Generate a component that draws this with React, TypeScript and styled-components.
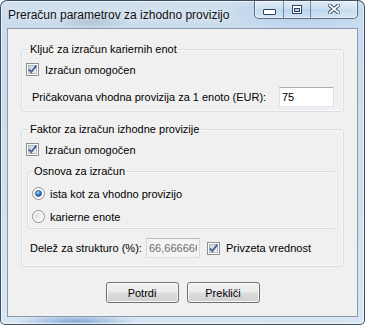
import React from "react";
import styled, { createGlobalStyle } from "styled-components";

const Global = createGlobalStyle`
  html, body { margin: 0; padding: 0; overflow: hidden; background: #ffffff; }
  * { box-sizing: border-box; }
`;

const UI_FONT = `"Liberation Sans", Arial, sans-serif`;

const Window = styled.div`
  width: 365px;
  height: 325px;
  border: 1px solid rgba(38, 52, 70, 0.85);
  border-radius: 7px 7px 5px 5px;
  padding: 0 6px 7px 6px;
  display: flex;
  flex-direction: column;
  background:
    radial-gradient(ellipse 60px 6px at 75px 320px, rgba(70, 120, 190, 0.55), transparent),
    radial-gradient(ellipse 40px 8px at 90px 20px, rgba(120, 140, 165, 0.35), transparent),
    radial-gradient(ellipse 80px 20px at 300px 10px, rgba(150, 195, 235, 0.6), transparent),
    linear-gradient(180deg, #d2e0ee 0px, #c9dbee 28px, #cfe0f1 200px, #d8e6f3 325px);
  box-shadow: inset 0 0 0 1px rgba(255, 255, 255, 0.55);
  overflow: hidden;
`;

const TitleBar = styled.div`
  height: 27px;
  display: flex;
  align-items: flex-start;
`;

const Title = styled.div`
  padding-left: 1px;
  line-height: 28px;
  font-family: ${UI_FONT};
  font-size: 12px;
  color: #111111;
  white-space: nowrap;
  text-shadow: 0 0 6px rgba(255, 255, 255, 0.9);
`;

const CaptionGroup = styled.div`
  margin-left: auto;
  margin-top: -1px;
  height: 19px;
  display: flex;
  border: 1px solid rgba(48, 66, 92, 0.75);
  border-top: none;
  border-radius: 0 0 5px 5px;
  overflow: hidden;
  background: linear-gradient(180deg, rgba(255, 255, 255, 0.55) 0%, rgba(255, 255, 255, 0.25) 50%, rgba(220, 235, 250, 0.2) 51%, rgba(255, 255, 255, 0.35) 100%);
  box-shadow: inset 0 0 0 1px rgba(255, 255, 255, 0.45);
`;

const CaptionButton = styled.div<{ $w: number }>`
  width: ${(p) => p.$w}px;
  height: 100%;
  display: flex;
  align-items: center;
  justify-content: center;
  & + & {
    border-left: 1px solid rgba(48, 66, 92, 0.55);
  }
`;

const Client = styled.div`
  flex: 1;
  border: 1px solid #8a9aab;
  background: #f0f0f0;
  padding: 0 13px;
  display: flex;
  flex-direction: column;
`;

const Group = styled.fieldset<{ $top: number; $side?: number }>`
  margin: ${(p) => p.$top}px ${(p) => p.$side ?? 0}px 0 ${(p) => p.$side ?? 0}px;
  padding: 0;
  min-width: 0;
  border: 1px solid #d5dfe5;
  border-radius: 3px;
  box-shadow: inset 0 0 0 1px rgba(255, 255, 255, 0.6);
`;

const Legend = styled.legend<{ $offset: number }>`
  margin-left: ${(p) => p.$offset}px;
  padding: 0 2px;
  font-family: ${UI_FONT};
  font-size: 11px;
  line-height: 13px;
  color: #000000;
`;

const GroupBody = styled.div<{ $pt: number; $pb: number }>`
  display: flex;
  flex-direction: column;
  padding: ${(p) => p.$pt}px 0 ${(p) => p.$pb}px 0;
`;

const OptionRow = styled.label<{ $indent: number; $top?: number; $gap: number }>`
  height: 17px;
  margin-top: ${(p) => p.$top ?? 0}px;
  padding-left: ${(p) => p.$indent}px;
  display: flex;
  align-items: center;
  gap: ${(p) => p.$gap}px;
  font-family: ${UI_FONT};
  font-size: 11px;
  color: #000000;
  white-space: nowrap;
`;

const FieldRow = styled.div<{ $indent: number; $top: number }>`
  height: 20px;
  margin-top: ${(p) => p.$top}px;
  padding-left: ${(p) => p.$indent}px;
  display: flex;
  align-items: center;
  font-family: ${UI_FONT};
  font-size: 11px;
  color: #000000;
  white-space: nowrap;
`;

const FieldLabel = styled.span<{ $w: number }>`
  width: ${(p) => p.$w}px;
  flex: none;
`;

const TextBox = styled.input<{ $w: number }>`
  width: ${(p) => p.$w}px;
  height: 20px;
  flex: none;
  margin: 0;
  padding: 0 2px;
  border: 1px solid;
  border-color: #abadb3 #dbdfe6 #e3e9ef #e2e3ea;
  background: #ffffff;
  font-family: ${UI_FONT};
  font-size: 11px;
  color: #000000;
  outline: none;
  &:disabled {
    background: #f4f4f4;
    border-color: #b6bcc3 #d5d9de #dcdfe3 #d5d9de;
    color: #6d6d6d;
  }
`;

const Spacer = styled.span<{ $w: number }>`
  width: ${(p) => p.$w}px;
  flex: none;
`;

const ButtonRow = styled.div`
  margin-top: 15px;
  display: flex;
  justify-content: center;
  gap: 8px;
`;

const PushButton = styled.button`
  width: 73px;
  height: 21px;
  margin: 0;
  padding: 0;
  border: 1px solid #707070;
  border-radius: 3px;
  background: linear-gradient(180deg, #f2f2f2 0%, #ebebeb 48%, #dddddd 52%, #cfcfcf 100%);
  box-shadow: inset 0 0 0 1px rgba(252, 252, 252, 0.9);
  font-family: ${UI_FONT};
  font-size: 11px;
  color: #000000;
`;

const BoxIcon = styled.svg`
  flex: none;
  display: block;
`;

function CheckBox() {
  return (
    <BoxIcon width="13" height="13" viewBox="0 0 13 13">
      <defs>
        <linearGradient id="cbg" x1="0" y1="0" x2="1" y2="1">
          <stop offset="0" stopColor="#cdd1d6" />
          <stop offset="1" stopColor="#f7f7f7" />
        </linearGradient>
      </defs>
      <rect x="0.5" y="0.5" width="12" height="12" fill="#ffffff" stroke="#8e8f8f" />
      <rect x="2.5" y="2.5" width="8" height="8" fill="url(#cbg)" stroke="#b2b7bd" />
      <path d="M3 6.3 L5.3 9 L10.3 2.6" fill="none" stroke="#4b5f99" strokeWidth="1.9" strokeLinejoin="miter" />
    </BoxIcon>
  );
}

function Radio({ checked }: { checked: boolean }) {
  return (
    <BoxIcon width="13" height="13" viewBox="0 0 13 13">
      <defs>
        <linearGradient id="rbg" x1="0" y1="0" x2="1" y2="1">
          <stop offset="0" stopColor="#d6d9dd" />
          <stop offset="1" stopColor="#fbfbfb" />
        </linearGradient>
        <radialGradient id="rdot" cx="0.4" cy="0.35" r="0.7">
          <stop offset="0" stopColor="#b7e4ff" />
          <stop offset="0.45" stopColor="#3d8ad6" />
          <stop offset="1" stopColor="#14428a" />
        </radialGradient>
      </defs>
      <circle cx="6.5" cy="6.5" r="6" fill="#ffffff" stroke="#8e8f8f" />
      <circle cx="6.5" cy="6.5" r="4.3" fill="url(#rbg)" />
      {checked && <circle cx="6.5" cy="6.5" r="3" fill="url(#rdot)" stroke="#1c4e8f" strokeWidth="0.6" />}
    </BoxIcon>
  );
}

function MinGlyph() {
  return (
    <svg width="13" height="6" viewBox="0 0 13 6" style={{ marginTop: 6 }}>
      <rect x="0.5" y="0.5" width="12" height="5" rx="0.5" fill="#ffffff" stroke="#33415a" />
    </svg>
  );
}

function MaxGlyph() {
  return (
    <svg width="10" height="9" viewBox="0 0 10 9">
      <rect x="0.5" y="0.5" width="9" height="8" fill="#ffffff" stroke="#33415a" />
      <rect x="2.5" y="3.5" width="5" height="3" fill="#b7cde4" stroke="#33415a" />
    </svg>
  );
}

function CloseGlyph() {
  return (
    <svg width="12" height="10" viewBox="0 0 12 10">
      <path d="M1.5 1.2 L10.5 8.8 M10.5 1.2 L1.5 8.8" stroke="#33415a" strokeWidth="3.6" strokeLinecap="square" />
      <path d="M1.5 1.2 L10.5 8.8 M10.5 1.2 L1.5 8.8" stroke="#ffffff" strokeWidth="1.8" strokeLinecap="square" />
    </svg>
  );
}

export default function App() {
  return (
    <>
      <Global />
      <Window>
        <TitleBar>
          <Title>Preračun parametrov za izhodno provizijo</Title>
          <CaptionGroup>
            <CaptionButton $w={28}>
              <MinGlyph />
            </CaptionButton>
            <CaptionButton $w={27}>
              <MaxGlyph />
            </CaptionButton>
            <CaptionButton $w={47}>
              <CloseGlyph />
            </CaptionButton>
          </CaptionGroup>
        </TitleBar>
        <Client>
          <Group $top={14}>
            <Legend $offset={6}>Ključ za izračun kariernih enot</Legend>
            <GroupBody $pt={5} $pb={4}>
              <OptionRow $indent={4} $gap={6}>
                <CheckBox />
                Izračun omogočen
              </OptionRow>
              <FieldRow $indent={10} $top={9}>
                <FieldLabel $w={247}>Pričakovana vhodna provizija za 1 enoto (EUR):</FieldLabel>
                <TextBox $w={55} value="75" readOnly />
              </FieldRow>
            </GroupBody>
          </Group>
          <Group $top={11}>
            <Legend $offset={6}>Faktor za izračun izhodne provizije</Legend>
            <GroupBody $pt={5} $pb={8}>
              <OptionRow $indent={4} $gap={6}>
                <CheckBox />
                Izračun omogočen
              </OptionRow>
              <Group $top={7} $side={5}>
                <Legend $offset={4}>Osnova za izračun</Legend>
                <GroupBody $pt={7} $pb={3}>
                  <OptionRow $indent={4} $gap={5}>
                    <Radio checked />
                    ista kot za vhodno provizijo
                  </OptionRow>
                  <OptionRow $indent={4} $gap={5} $top={6}>
                    <Radio checked={false} />
                    karierne enote
                  </OptionRow>
                </GroupBody>
              </Group>
              <FieldRow $indent={8} $top={9}>
                <FieldLabel $w={116}>Delež za strukturo (%):</FieldLabel>
                <TextBox $w={54} value="66,666666666" disabled readOnly />
                <Spacer $w={7} />
                <CheckBox />
                <Spacer $w={6} />
                Privzeta vrednost
              </FieldRow>
            </GroupBody>
          </Group>
          <ButtonRow>
            <PushButton>Potrdi</PushButton>
            <PushButton>Prekliči</PushButton>
          </ButtonRow>
        </Client>
      </Window>
    </>
  );
}
